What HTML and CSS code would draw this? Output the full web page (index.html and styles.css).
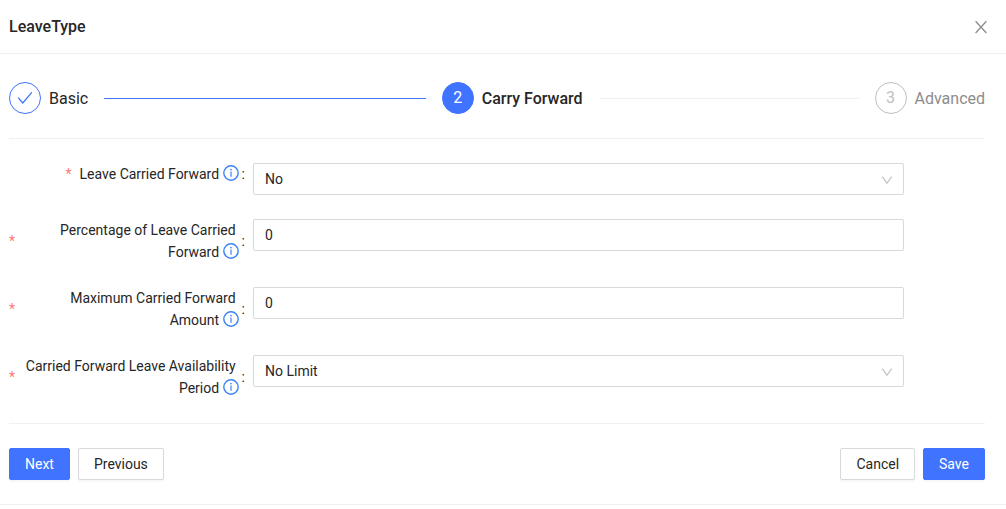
FILE: index.html
```html
<!DOCTYPE html>
<html lang="en">
<head>
<meta charset="utf-8">
<meta name="viewport" content="width=device-width, initial-scale=1">
<title>LeaveType</title>
<link rel="stylesheet" href="styles.css">
</head>
<body>
<svg class="sprite" aria-hidden="true">
  <symbol id="info" viewBox="0 0 16 16"><circle cx="8" cy="8" r="7.2" fill="none" stroke="currentColor" stroke-width="1.4"/><path d="M8 6.6v5.2" fill="none" stroke="currentColor" stroke-width="1.2"/><circle cx="8" cy="4.6" r=".85" fill="currentColor"/></symbol>
  <symbol id="chevron" viewBox="0 0 12 12"><path d="M1.3 2.6 6 9.2l4.7-6.6" fill="none" stroke="currentColor" stroke-width="1.1"/></symbol>
</svg>
<main class="dialog">
  <header class="dialog-header">
    <h1 class="title">LeaveType</h1>
    <button class="close" type="button" aria-label="Close"><svg viewBox="0 0 16 16" width="16" height="16"><path d="M2.6 2.2 13.4 14M13.4 2.2 2.6 14" fill="none" stroke="currentColor" stroke-width="1.3"/></svg></button>
  </header>
  <form class="dialog-body">
    <ol class="steps">
      <li class="step done"><span class="step-icon"><svg viewBox="0 0 16 16" width="16" height="16"><path d="M1.2 7.6 5.8 13 14.8 2.4" fill="none" stroke="currentColor" stroke-width="1.3"/></svg></span><span class="step-title">Basic</span></li>
      <li class="step active" aria-current="step"><span class="step-icon">2</span><span class="step-title">Carry Forward</span></li>
      <li class="step waiting"><span class="step-icon">3</span><span class="step-title">Advanced</span></li>
    </ol>
    <div class="fields">
      <div class="field">
        <label class="label" for="carried"><span class="required">*</span><span class="label-text">Leave Carried Forward <svg class="info"><use href="#info"/></svg></span><span class="colon">:</span></label>
        <div class="control"><select class="input" id="carried"><option>No</option><option>Yes</option></select><svg class="chevron"><use href="#chevron"/></svg></div>
      </div>
      <div class="field">
        <label class="label" for="percentage"><span class="required">*</span><span class="label-text">Percentage of Leave Carried Forward <svg class="info"><use href="#info"/></svg></span><span class="colon">:</span></label>
        <div class="control"><input class="input" id="percentage" type="text" value="0"></div>
      </div>
      <div class="field">
        <label class="label" for="maximum"><span class="required">*</span><span class="label-text">Maximum Carried Forward Amount <svg class="info"><use href="#info"/></svg></span><span class="colon">:</span></label>
        <div class="control"><input class="input" id="maximum" type="text" value="0"></div>
      </div>
      <div class="field">
        <label class="label" for="period"><span class="required">*</span><span class="label-text">Carried Forward Leave Availability Period <svg class="info"><use href="#info"/></svg></span><span class="colon">:</span></label>
        <div class="control"><select class="input" id="period"><option>No Limit</option></select><svg class="chevron"><use href="#chevron"/></svg></div>
      </div>
    </div>
    <div class="actions">
      <div class="button-group"><button class="button primary" type="button">Next</button><button class="button" type="button">Previous</button></div>
      <div class="button-group"><button class="button" type="button">Cancel</button><button class="button primary" type="submit">Save</button></div>
    </div>
  </form>
</main>
</body>
</html>
```
FILE: styles.css
```css
* { box-sizing: border-box; }
body { margin: 0; background: #fff; color: #262626; font: 14px/22px Roboto, sans-serif; }
button, input, select { font: inherit; color: inherit; }
.sprite { position: absolute; width: 0; height: 0; }
.dialog { border-bottom: 1px solid #f0f0f0; }
.dialog-header { display: flex; align-items: center; justify-content: space-between; padding: 16px 17px 15px 9px; border-bottom: 1px solid #f0f0f0; }
.title { margin: 0; font-size: 16px; line-height: 22px; font-weight: 500; }
.close { display: flex; padding: 0; border: 0; background: none; color: #8c8c8c; }
.dialog-body { padding: 28px 21px 24px 9px; }
.steps { display: flex; gap: 16px; margin: 0; padding: 0 0 24px; border-bottom: 1px solid #f0f0f0; list-style: none; }
.step { display: flex; align-items: center; gap: 8px; flex: 1; font-size: 16px; line-height: 30px; white-space: nowrap; }
.step:last-child { flex: none; }
.step:not(:last-child)::after { content: ""; flex: 1; height: 1px; margin-left: 8px; background: #f0f0f0; }
.step.done::after { background: #4073ff; }
.step-icon { display: flex; align-items: center; justify-content: center; width: 32px; height: 32px; border: 1px solid #4073ff; border-radius: 50%; color: #4073ff; }
.step-title { padding-top: 2px; }
.active .step-icon { background: #4073ff; color: #fff; }
.active .step-title { font-weight: 500; }
.waiting .step-icon { border-color: #bfbfbf; color: #bfbfbf; }
.waiting .step-title { color: #8c8c8c; }
.fields { display: grid; gap: 24px; padding: 24px 0; border-bottom: 1px solid #f0f0f0; }
.field { display: grid; grid-template-columns: 6fr 16fr 2fr; align-items: start; }
.label { display: flex; align-items: center; justify-content: flex-end; padding-right: 8px; }
.required { margin-right: 8px; color: #ff7875; }
.label-text { padding-right: 3px; text-align: right; }
.info { width: 16px; height: 16px; margin-right: -3px; vertical-align: -2px; color: #3b82f6; }
.colon { margin-left: 3px; }
.control { position: relative; }
.input { display: block; width: 100%; height: 32px; padding: 4px 11px; border: 1px solid #d9d9d9; border-radius: 2px; background: #fff; appearance: none; }
.chevron { position: absolute; top: 11px; right: 11px; width: 12px; height: 12px; color: #bfbfbf; pointer-events: none; }
.actions { display: flex; justify-content: space-between; padding-top: 24px; }
.button-group { display: flex; gap: 8px; }
.button { height: 32px; padding: 4px 15px; border: 1px solid #d9d9d9; border-radius: 2px; background: #fff; box-shadow: 0 2px 0 rgba(0, 0, 0, .03); }
.primary { border-color: #4073ff; background: #4073ff; color: #fff; }
```
